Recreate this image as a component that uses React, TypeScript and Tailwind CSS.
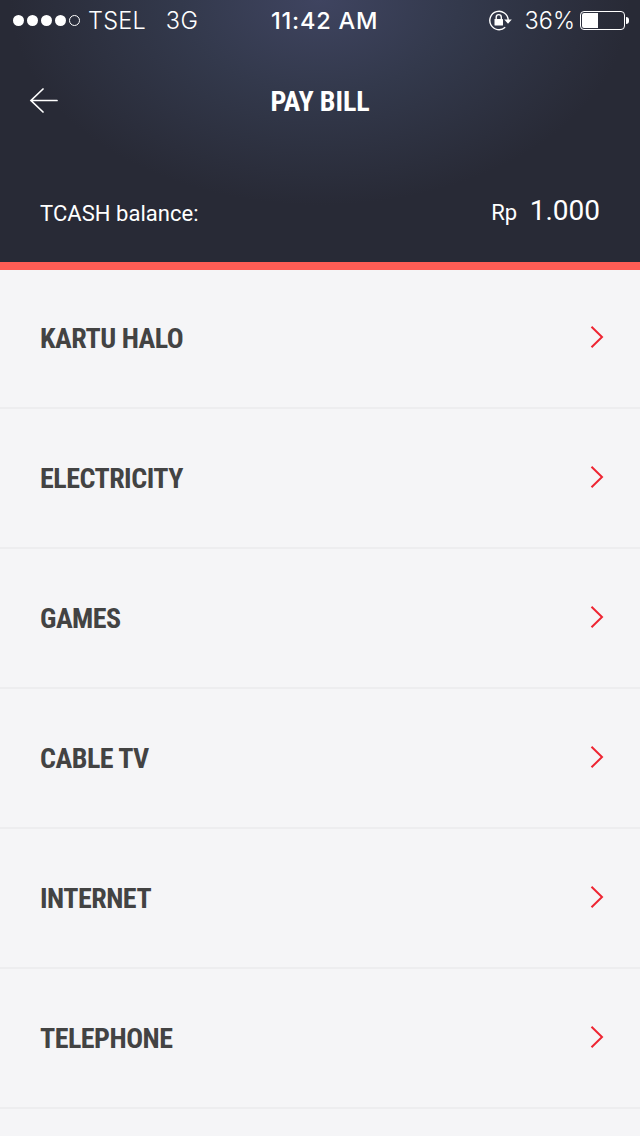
const billCategories = [
  "KARTU HALO",
  "ELECTRICITY",
  "GAMES",
  "CABLE TV",
  "INTERNET",
  "TELEPHONE",
];

const RotationLockIcon = () => (
  <svg width="24" height="22" viewBox="0 0 24 22" fill="none">
    <path
      d="M20.2 10A9.2 9.2 0 1 0 17.2 17.3"
      stroke="white"
      strokeWidth="1.4"
    />
    <path d="M16.2 9.5H23.8L20 13.8Z" fill="white" />
    <rect x="6.5" y="9" width="8.5" height="6.5" rx="0.6" fill="white" />
    <path
      d="M8.2 9.5V7.2a2.55 2.55 0 0 1 5.1 0V9.5"
      stroke="white"
      strokeWidth="1.4"
    />
  </svg>
);

const StatusBar = () => {
  return (
    <div className="grid h-10 grid-cols-[258px_auto_1fr] items-center pl-[13px] pr-[11px] font-['Inter','Liberation_Sans',sans-serif] text-[23.5px] leading-10">
      <div className="flex items-center">
        <div className="flex gap-[3px]">
          {[1, 2, 3, 4].map((dot) => (
            <span key={dot} className="size-[11px] rounded-full bg-white" />
          ))}
          <span className="size-[11px] rounded-full border border-white" />
        </div>
        <span className="ml-2 pt-px font-light tracking-[0.2px]">TSEL</span>
        <span className="ml-5 pt-px font-light tracking-[0.4px]">3G</span>
      </div>
      <span className="pt-px font-medium tracking-[0.8px]">11:42 AM</span>
      <div className="flex items-center justify-end">
        <RotationLockIcon />
        <span className="ml-[13px] pt-px font-light">36%</span>
        <div className="ml-[5px] flex h-[19px] w-[45px] rounded-[4px] border border-white p-px">
          <span className="w-4 rounded-l-[2px] bg-white" />
        </div>
        <span className="ml-px h-[7px] w-[3px] rounded-r-full bg-white" />
      </div>
    </div>
  );
};

const App = () => {
  return (
    <div className="h-[1136px] w-[640px] overflow-hidden bg-[#f5f5f7] font-['Roboto',sans-serif]">
      <header className="flex h-[270px] flex-col border-b-8 border-[#ff5d55] bg-[#282a36] bg-[radial-gradient(ellipse_310px_205px_at_50%_0%,#3f4460_0%,#33394c_45%,#282a36_100%)] text-white">
        <StatusBar />
        <div className="grid h-[122px] grid-cols-[1fr_auto_1fr] items-center px-[29px]">
          <svg width="30" height="26" viewBox="0 0 30 26" fill="none">
            <path
              d="M14 1L2 12.5L14 24M2 12.5H28"
              stroke="white"
              strokeWidth="1.7"
              strokeLinecap="round"
            />
          </svg>
          <h1 className="pt-0.5 font-['Roboto_Condensed','Roboto',sans-serif] text-[28px] font-bold tracking-[-0.1px] [font-stretch:75%]">
            PAY BILL
          </h1>
        </div>
        <div className="flex flex-1 justify-between px-10 pt-7">
          <span className="pt-[7px] text-[22px] tracking-[0.05px]">
            TCASH balance:
          </span>
          <span className="text-[22px]">
            Rp <span className="ml-[7px] text-[28px]">1.000</span>
          </span>
        </div>
      </header>
      <ul className="-mt-px">
        {billCategories.map((category) => (
          <li
            key={category}
            className="flex h-[140px] items-center justify-between border-b-2 border-[#ededef] pl-10 pr-9"
          >
            <span className="pt-px font-['Roboto_Condensed','Roboto',sans-serif] text-[28px] font-bold tracking-[-0.5px] text-[#434343] [font-stretch:75%]">
              {category}
            </span>
            <svg
              width="14"
              height="24"
              viewBox="0 0 14 24"
              fill="none"
              className="mb-0.5"
            >
              <path
                d="M1.5 1.7L12 12L1.5 22.3"
                stroke="#ee2532"
                strokeWidth="2"
              />
            </svg>
          </li>
        ))}
      </ul>
    </div>
  );
};

export default App;
